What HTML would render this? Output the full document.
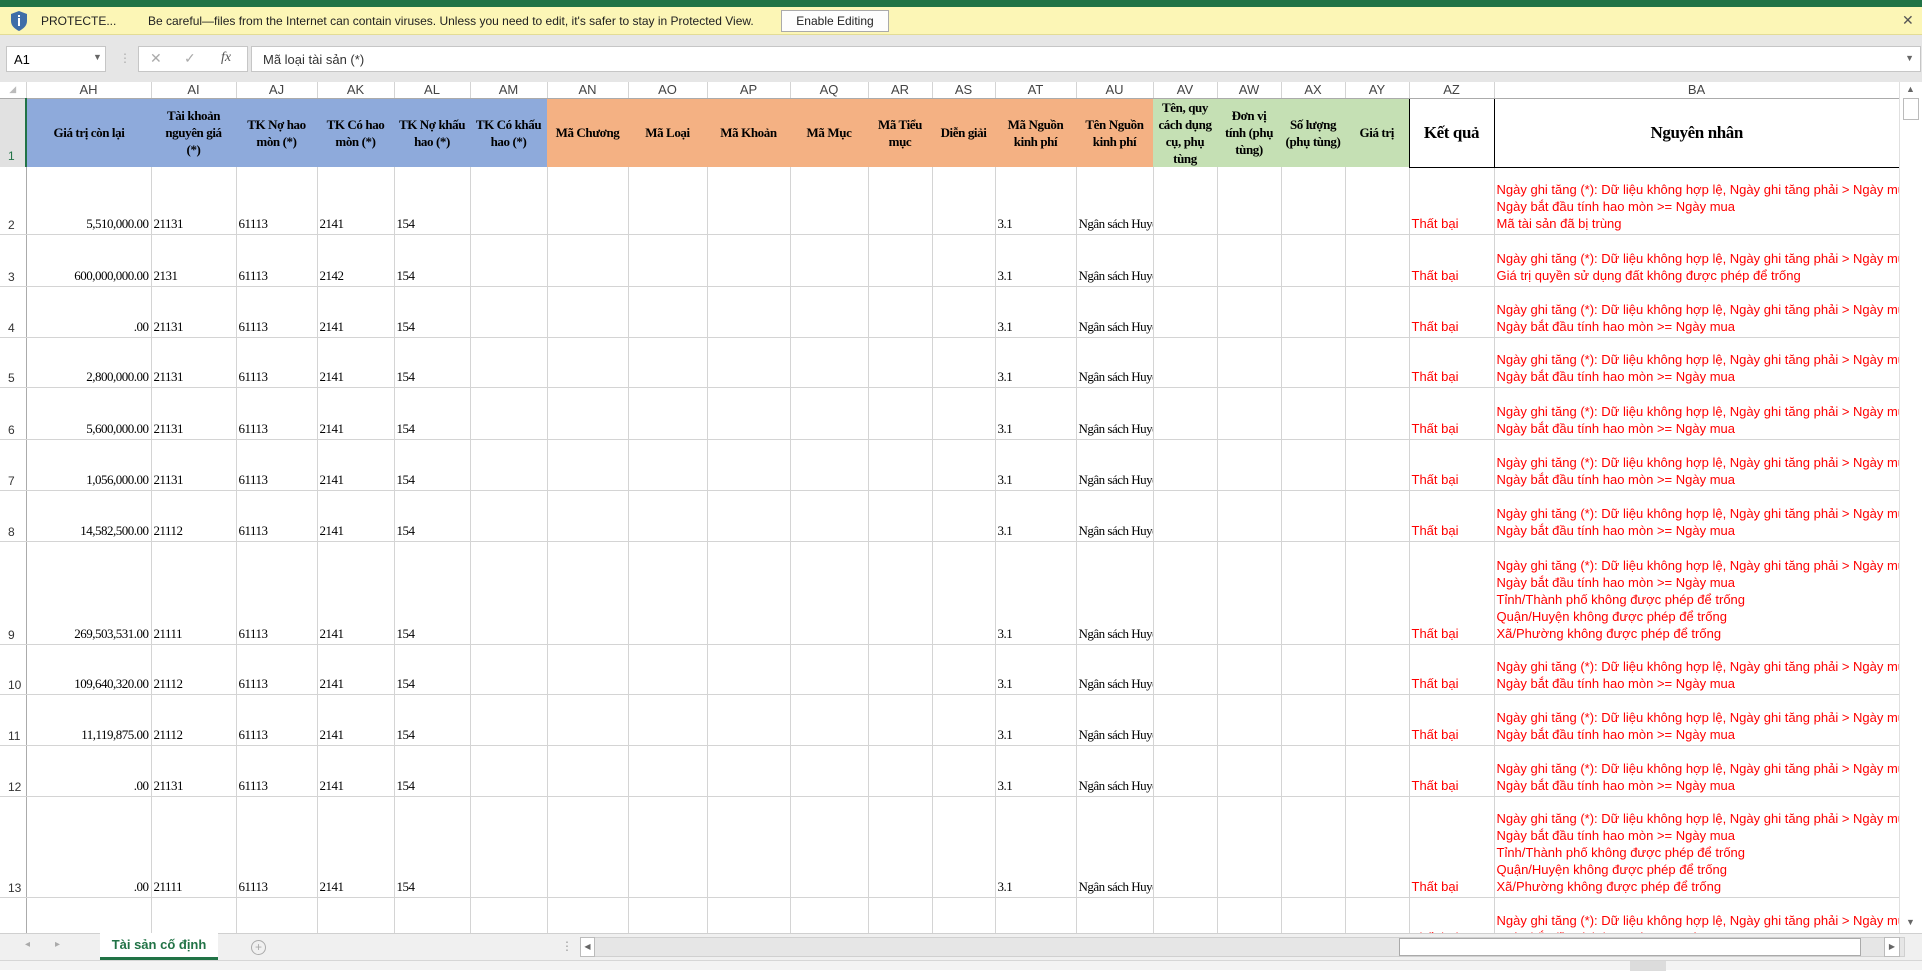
<!DOCTYPE html>
<html><head><meta charset="utf-8">
<style>
*{margin:0;padding:0;box-sizing:border-box}
body{width:1922px;height:970px;overflow:hidden;background:#fff;position:relative;font-family:"Liberation Sans",sans-serif}
.abs{position:absolute}
#green{left:0;top:0;width:1922px;height:7px;background:#217346}
#yellow{left:0;top:7px;width:1922px;height:28px;background:#fcf6b6;border-bottom:1px solid #e3dc96;font-size:12px;color:#222}
#gray{left:0;top:35px;width:1922px;height:47px;background:#e6e6e6}
.box{background:#fff;border:1px solid #c6c6c6}
#grid{left:0;top:82px;width:1899px;height:851px;overflow:hidden}
table{border-collapse:collapse;table-layout:fixed;width:1899px}
td{border-right:1px solid #d4d4d4;border-bottom:1px solid #d4d4d4;overflow:hidden;white-space:nowrap;vertical-align:bottom;font-family:"Liberation Serif",serif;font-size:13px;padding:0 2px 2px 2px;letter-spacing:-0.5px}
tr.ch td{height:16px;font-family:"Liberation Sans",sans-serif;font-size:13px;color:#444;text-align:center;vertical-align:middle;padding:0;border-bottom:1px solid #ababab;letter-spacing:0}
td.rn{font-family:"Liberation Sans",sans-serif;font-size:12px;color:#333;padding-left:8px;letter-spacing:0;border-right:1px solid #ababab}
tr.h td{height:69px;font-weight:bold;font-size:13px;letter-spacing:-0.4px;text-align:center;vertical-align:middle;white-space:normal;line-height:17px;border-right:none;border-bottom:none;padding:0 4px}
.b{background:#8eaadb}.o{background:#f4b183}.g{background:#c5e0b4}
td.r{text-align:right}
td.red{color:#f00;font-family:"Liberation Sans",sans-serif;font-size:13px;line-height:17px;letter-spacing:0}
</style></head><body>
<div class="abs" id="green"></div>
<div class="abs" id="yellow">
 <svg class="abs" style="left:10px;top:3px" width="18" height="22" viewBox="0 0 18 22"><path d="M9 1 L17 4 L17 11 C17 16 13 19 9 21 C5 19 1 16 1 11 L1 4 Z" fill="#3f6ea8"/><rect x="8" y="8" width="2" height="8" fill="#fff"/><rect x="8" y="5" width="2" height="2" fill="#fff"/></svg>
 <span class="abs" style="left:41px;top:7px">PROTECTE...</span>
 <span class="abs" style="left:148px;top:7px">Be careful—files from the Internet can contain viruses. Unless you need to edit, it's safer to stay in Protected View.</span>
 <div class="abs" style="left:781px;top:3px;width:108px;height:22px;background:#fdfdfd;border:1px solid #aaa;text-align:center;line-height:20px">Enable Editing</div>
 <span class="abs" style="left:1902px;top:5px;font-size:14px;color:#555">✕</span>
</div>
<div class="abs" id="gray">
 <div class="abs box" style="left:6px;top:11px;width:100px;height:26px;font-size:13px;padding:5px 0 0 7px">A1<span class="abs" style="left:86px;top:5px;font-size:9px;color:#666">▼</span></div>
 <span class="abs" style="left:119px;top:16px;color:#aaa;font-size:12px">⋮</span>
 <div class="abs box" style="left:138px;top:11px;width:110px;height:26px;color:#aaa;font-size:14px"><span class="abs" style="left:11px;top:3px">✕</span><span class="abs" style="left:45px;top:3px">✓</span><span class="abs" style="left:82px;top:3px;font-family:'Liberation Serif',serif;font-style:italic;color:#555">fx</span></div>
 <div class="abs box" style="left:251px;top:11px;width:1670px;height:26px;font-size:13px;padding:5px 0 0 11px;color:#333">Mã loại tài sản (*)<span class="abs" style="right:6px;top:6px;font-size:9px;color:#666">▼</span></div>
</div>
<div class="abs" id="grid">
<table>
<colgroup><col style="width:26px"><col style="width:125px"><col style="width:85px"><col style="width:81px"><col style="width:77px"><col style="width:76px"><col style="width:77px"><col style="width:81px"><col style="width:79px"><col style="width:83px"><col style="width:78px"><col style="width:64px"><col style="width:63px"><col style="width:81px"><col style="width:77px"><col style="width:64px"><col style="width:64px"><col style="width:64px"><col style="width:64px"><col style="width:85px"><col style="width:405px"></colgroup>
<tr class="ch"><td style="color:#bbb;font-size:9px">◢</td><td>AH</td><td>AI</td><td>AJ</td><td>AK</td><td>AL</td><td>AM</td><td>AN</td><td>AO</td><td>AP</td><td>AQ</td><td>AR</td><td>AS</td><td>AT</td><td>AU</td><td>AV</td><td>AW</td><td>AX</td><td>AY</td><td>AZ</td><td>BA</td></tr>
<tr class="h"><td class="rn" style="vertical-align:bottom;background:#e1e1e1;color:#217346;border-right:2px solid #217346;font-weight:normal;text-align:left;font-size:12px;letter-spacing:0;padding:0 0 2px 8px">1</td>
<td class="b">Giá trị còn lại</td><td class="b" style="padding:0 10px">Tài khoản nguyên giá (*)</td><td class="b" style="padding:0 10px">TK Nợ hao mòn (*)</td><td class="b" style="padding:0 8px">TK Có hao mòn (*)</td><td class="b" style="padding:0 1px">TK Nợ khấu hao (*)</td><td class="b" style="padding:0 1px">TK Có khấu hao (*)</td>
<td class="o">Mã Chương</td><td class="o">Mã Loại</td><td class="o">Mã Khoản</td><td class="o">Mã Mục</td><td class="o">Mã Tiểu mục</td><td class="o" style="padding:0 1px">Diễn giải</td><td class="o" style="padding:0 10px">Mã Nguồn kinh phí</td><td class="o" style="padding:0 3px">Tên Nguồn kinh phí</td>
<td class="g" style="padding:0 2px">Tên, quy cách dụng cụ, phụ tùng</td><td class="g" style="padding:0 6px">Đơn vị tính (phụ tùng)</td><td class="g" style="padding:0 2px">Số lượng (phụ tùng)</td><td class="g">Giá trị</td>
<td style="border:1.5px solid #000;font-size:17px">Kết quả</td><td style="border:1.5px solid #000;border-right:none;font-size:17px">Nguyên nhân</td></tr>
<tr style="height:67px"><td class="rn">2</td><td class="r">5,510,000.00</td><td>21131</td><td>61113</td><td>2141</td><td>154</td><td></td><td></td><td></td><td></td><td></td><td></td><td></td><td>3.1</td><td>Ngân sách Huyện</td><td></td><td></td><td></td><td></td><td class="red">Thất bại</td><td class="red">Ngày ghi tăng (*): Dữ liệu không hợp lệ, Ngày ghi tăng phải &gt; Ngày mua<br>Ngày bắt đầu tính hao mòn &gt;= Ngày mua<br>Mã tài sản đã bị trùng</td></tr>
<tr style="height:52px"><td class="rn">3</td><td class="r">600,000,000.00</td><td>2131</td><td>61113</td><td>2142</td><td>154</td><td></td><td></td><td></td><td></td><td></td><td></td><td></td><td>3.1</td><td>Ngân sách Huyện</td><td></td><td></td><td></td><td></td><td class="red">Thất bại</td><td class="red">Ngày ghi tăng (*): Dữ liệu không hợp lệ, Ngày ghi tăng phải &gt; Ngày mua<br>Giá trị quyền sử dụng đất không được phép để trống</td></tr>
<tr style="height:51px"><td class="rn">4</td><td class="r">.00</td><td>21131</td><td>61113</td><td>2141</td><td>154</td><td></td><td></td><td></td><td></td><td></td><td></td><td></td><td>3.1</td><td>Ngân sách Huyện</td><td></td><td></td><td></td><td></td><td class="red">Thất bại</td><td class="red">Ngày ghi tăng (*): Dữ liệu không hợp lệ, Ngày ghi tăng phải &gt; Ngày mua<br>Ngày bắt đầu tính hao mòn &gt;= Ngày mua</td></tr>
<tr style="height:50px"><td class="rn">5</td><td class="r">2,800,000.00</td><td>21131</td><td>61113</td><td>2141</td><td>154</td><td></td><td></td><td></td><td></td><td></td><td></td><td></td><td>3.1</td><td>Ngân sách Huyện</td><td></td><td></td><td></td><td></td><td class="red">Thất bại</td><td class="red">Ngày ghi tăng (*): Dữ liệu không hợp lệ, Ngày ghi tăng phải &gt; Ngày mua<br>Ngày bắt đầu tính hao mòn &gt;= Ngày mua</td></tr>
<tr style="height:52px"><td class="rn">6</td><td class="r">5,600,000.00</td><td>21131</td><td>61113</td><td>2141</td><td>154</td><td></td><td></td><td></td><td></td><td></td><td></td><td></td><td>3.1</td><td>Ngân sách Huyện</td><td></td><td></td><td></td><td></td><td class="red">Thất bại</td><td class="red">Ngày ghi tăng (*): Dữ liệu không hợp lệ, Ngày ghi tăng phải &gt; Ngày mua<br>Ngày bắt đầu tính hao mòn &gt;= Ngày mua</td></tr>
<tr style="height:51px"><td class="rn">7</td><td class="r">1,056,000.00</td><td>21131</td><td>61113</td><td>2141</td><td>154</td><td></td><td></td><td></td><td></td><td></td><td></td><td></td><td>3.1</td><td>Ngân sách Huyện</td><td></td><td></td><td></td><td></td><td class="red">Thất bại</td><td class="red">Ngày ghi tăng (*): Dữ liệu không hợp lệ, Ngày ghi tăng phải &gt; Ngày mua<br>Ngày bắt đầu tính hao mòn &gt;= Ngày mua</td></tr>
<tr style="height:51px"><td class="rn">8</td><td class="r">14,582,500.00</td><td>21112</td><td>61113</td><td>2141</td><td>154</td><td></td><td></td><td></td><td></td><td></td><td></td><td></td><td>3.1</td><td>Ngân sách Huyện</td><td></td><td></td><td></td><td></td><td class="red">Thất bại</td><td class="red">Ngày ghi tăng (*): Dữ liệu không hợp lệ, Ngày ghi tăng phải &gt; Ngày mua<br>Ngày bắt đầu tính hao mòn &gt;= Ngày mua</td></tr>
<tr style="height:103px"><td class="rn">9</td><td class="r">269,503,531.00</td><td>21111</td><td>61113</td><td>2141</td><td>154</td><td></td><td></td><td></td><td></td><td></td><td></td><td></td><td>3.1</td><td>Ngân sách Huyện</td><td></td><td></td><td></td><td></td><td class="red">Thất bại</td><td class="red">Ngày ghi tăng (*): Dữ liệu không hợp lệ, Ngày ghi tăng phải &gt; Ngày mua<br>Ngày bắt đầu tính hao mòn &gt;= Ngày mua<br>Tỉnh/Thành phố không được phép để trống<br>Quận/Huyện không được phép để trống<br>Xã/Phường không được phép để trống</td></tr>
<tr style="height:50px"><td class="rn">10</td><td class="r">109,640,320.00</td><td>21112</td><td>61113</td><td>2141</td><td>154</td><td></td><td></td><td></td><td></td><td></td><td></td><td></td><td>3.1</td><td>Ngân sách Huyện</td><td></td><td></td><td></td><td></td><td class="red">Thất bại</td><td class="red">Ngày ghi tăng (*): Dữ liệu không hợp lệ, Ngày ghi tăng phải &gt; Ngày mua<br>Ngày bắt đầu tính hao mòn &gt;= Ngày mua</td></tr>
<tr style="height:51px"><td class="rn">11</td><td class="r">11,119,875.00</td><td>21112</td><td>61113</td><td>2141</td><td>154</td><td></td><td></td><td></td><td></td><td></td><td></td><td></td><td>3.1</td><td>Ngân sách Huyện</td><td></td><td></td><td></td><td></td><td class="red">Thất bại</td><td class="red">Ngày ghi tăng (*): Dữ liệu không hợp lệ, Ngày ghi tăng phải &gt; Ngày mua<br>Ngày bắt đầu tính hao mòn &gt;= Ngày mua</td></tr>
<tr style="height:51px"><td class="rn">12</td><td class="r">.00</td><td>21131</td><td>61113</td><td>2141</td><td>154</td><td></td><td></td><td></td><td></td><td></td><td></td><td></td><td>3.1</td><td>Ngân sách Huyện</td><td></td><td></td><td></td><td></td><td class="red">Thất bại</td><td class="red">Ngày ghi tăng (*): Dữ liệu không hợp lệ, Ngày ghi tăng phải &gt; Ngày mua<br>Ngày bắt đầu tính hao mòn &gt;= Ngày mua</td></tr>
<tr style="height:101px"><td class="rn">13</td><td class="r">.00</td><td>21111</td><td>61113</td><td>2141</td><td>154</td><td></td><td></td><td></td><td></td><td></td><td></td><td></td><td>3.1</td><td>Ngân sách Huyện</td><td></td><td></td><td></td><td></td><td class="red">Thất bại</td><td class="red">Ngày ghi tăng (*): Dữ liệu không hợp lệ, Ngày ghi tăng phải &gt; Ngày mua<br>Ngày bắt đầu tính hao mòn &gt;= Ngày mua<br>Tỉnh/Thành phố không được phép để trống<br>Quận/Huyện không được phép để trống<br>Xã/Phường không được phép để trống</td></tr>
<tr style="height:51px"><td class="rn">14</td><td class="r">.00</td><td>21131</td><td>61113</td><td>2141</td><td>154</td><td></td><td></td><td></td><td></td><td></td><td></td><td></td><td>3.1</td><td>Ngân sách Huyện</td><td></td><td></td><td></td><td></td><td class="red">Thất bại</td><td class="red">Ngày ghi tăng (*): Dữ liệu không hợp lệ, Ngày ghi tăng phải &gt; Ngày mua<br>Ngày bắt đầu tính hao mòn &gt;= Ngày mua</td></tr>
</table>
</div>
<div class="abs" style="left:1899px;top:82px;width:23px;height:851px;background:#fff;border-left:1px solid #e0e0e0">
 <span class="abs" style="left:6px;top:2px;font-size:9px;color:#666">▲</span>
 <div class="abs" style="left:3px;top:16px;width:16px;height:22px;border:1px solid #bbb;background:#fff"></div>
 <span class="abs" style="left:6px;top:835px;font-size:9px;color:#666">▼</span>
</div>
<div class="abs" style="left:0;top:933px;width:1922px;height:27px;background:#f0f0f0;border-top:1px solid #d0d0d0">
 <span class="abs" style="left:25px;top:5px;font-size:10px;color:#aaa">◂</span>
 <span class="abs" style="left:55px;top:5px;font-size:10px;color:#aaa">▸</span>
 <div class="abs" style="left:100px;top:-1px;width:118px;height:27px;background:#fff;border-bottom:3px solid #217346;color:#217346;font-weight:bold;font-size:13px;text-align:center;line-height:24px">Tài sản cố định</div>
 <div class="abs" style="left:251px;top:6px;width:15px;height:15px;border:1px solid #aaa;border-radius:50%;color:#aaa;font-size:12px;line-height:13px;text-align:center">+</div>
 <span class="abs" style="left:561px;top:5px;font-size:12px;color:#999">⋮</span>
 <div class="abs" style="left:580px;top:3px;width:1325px;height:20px;background:#e6e6e6;border:1px solid #d0d0d0"></div>
 <div class="abs" style="left:580px;top:3px;width:15px;height:20px;background:#fff;border:1px solid #bbb;font-size:8px;color:#666;text-align:center;line-height:18px">◀</div>
 <div class="abs" style="left:1399px;top:4px;width:462px;height:18px;background:#fff;border:1px solid #aaa"></div>
 <div class="abs" style="left:1884px;top:3px;width:16px;height:20px;background:#fff;border:1px solid #bbb;font-size:8px;color:#666;text-align:center;line-height:18px">▶</div>
</div>
<div class="abs" style="left:0;top:960px;width:1922px;height:10px;background:#f3f3f3;border-top:1px solid #d6d6d6">
 <div class="abs" style="left:1630px;top:0;width:36px;height:10px;background:#dcdcdc"></div>
</div>
</body></html>
